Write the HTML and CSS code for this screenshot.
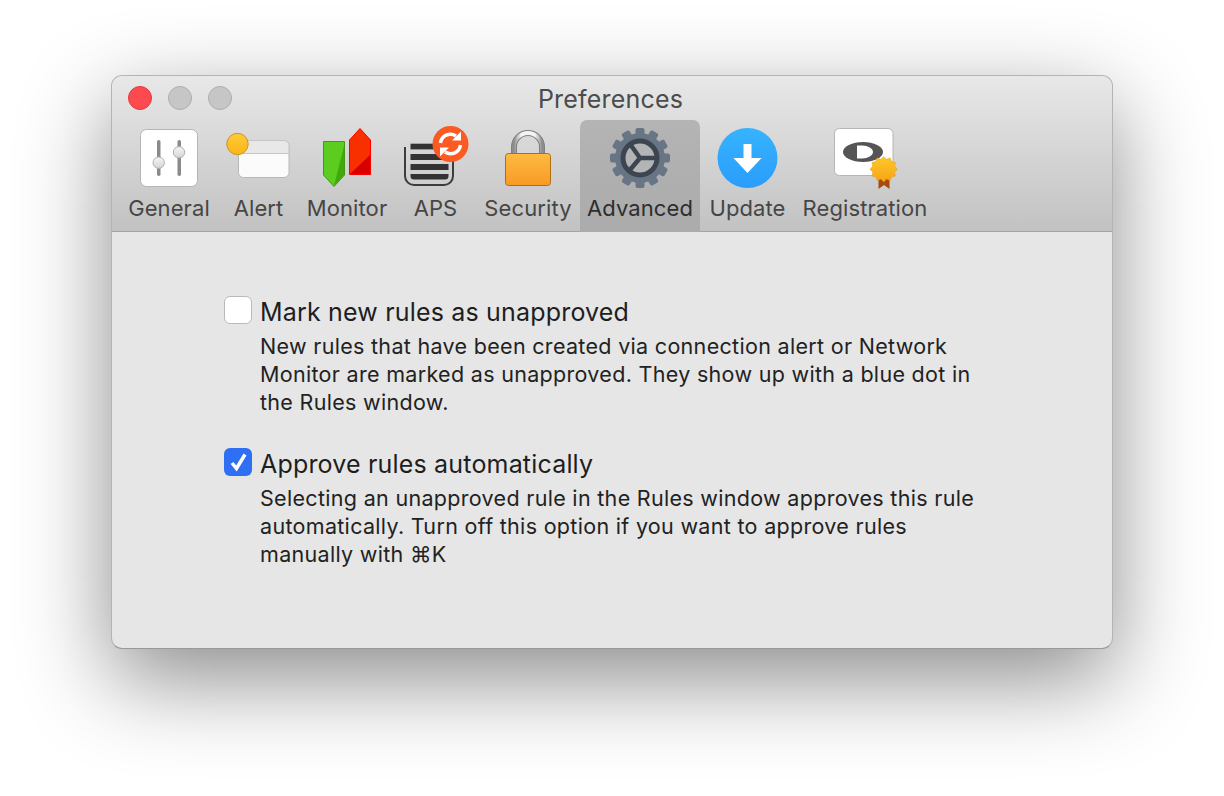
FILE: index.html
```html
<!DOCTYPE html>
<html lang="en">
<head>
  <meta charset="UTF-8" />
  <title>Preferences</title>
  <link rel="stylesheet" href="styles.css">
</head>
<body>
  <div class="window">
    <div class="toolbar">
      <div class="titlebar">
        <div class="lights">
          <span class="light close"></span>
          <span class="light"></span>
          <span class="light"></span>
        </div>
        <div class="title">Preferences</div>
      </div>
      <div class="tabs">
        <div class="tab tab-general">
          <svg class="icon" width="64" height="64" viewBox="0 0 64 64">
            <defs>
              <linearGradient id="thumb" x1="0" y1="0" x2="0" y2="1">
                <stop offset="0" stop-color="#f6f6f6"/>
                <stop offset="1" stop-color="#d4d4d4"/>
              </linearGradient>
            </defs>
            <rect x="3.500" y="1.500" width="57" height="57" rx="6" fill="#fff" stroke="#b5b5b5"/>
            <rect x="20" y="12" width="3.500" height="36" rx="1.700" fill="#8a8a8a"/>
            <rect x="40.500" y="12" width="3.500" height="36" rx="1.700" fill="#8a8a8a"/>
            <circle cx="21.700" cy="34.700" r="5.700" fill="url(#thumb)" stroke="#b0b0b0"/>
            <circle cx="42" cy="24.300" r="5.700" fill="url(#thumb)" stroke="#b0b0b0"/>
          </svg>
          <span class="label">General</span>
        </div>
        <div class="tab tab-alert">
          <svg class="icon" width="64" height="64" viewBox="0 0 64 64">
            <defs>
              <linearGradient id="yellow" x1="0" y1="0" x2="0" y2="1">
                <stop offset="0" stop-color="#fdcb3a"/>
                <stop offset="1" stop-color="#fcb416"/>
              </linearGradient>
            </defs>
            <rect x="11.500" y="12.500" width="50.500" height="37" rx="5" fill="#fbfbfb" stroke="#b8b8b8"/>
            <path d="M12 25.500V17.500a5 5 0 0 1 5-5h40a5 5 0 0 1 5 5v8z" fill="#e8e8e8" stroke="#c6c6c6"/>
            <circle cx="10.500" cy="16" r="10.700" fill="url(#yellow)" stroke="#c9962a"/>
          </svg>
          <span class="label">Alert</span>
        </div>
        <div class="tab tab-monitor">
          <svg class="icon" width="64" height="64" viewBox="0 0 64 64">
            <path d="M8.500 13.500h21v33.500L19 58.500 8.500 47z" fill="#5ccc1e" stroke="#3f9a12"/>
            <path d="M19 58 29 18v29z" fill="#41a80e"/>
            <path d="M34.500 46.500V12L45 .5 55.500 12v34.500z" fill="#f83000" stroke="#ff0000"/>
            <path d="M35 46 55 27v19z" fill="#d60000"/>
          </svg>
          <span class="label">Monitor</span>
        </div>
        <div class="tab tab-aps">
          <svg class="icon" width="70" height="64" viewBox="0 0 70 64">
            <path d="M4 19v29a9 9 0 0 0 9 9h30a9 9 0 0 0 9-9V30" fill="none" stroke="#3c3c3c" stroke-width="2"/>
            <rect x="9.500" y="15.700" width="38" height="5.700" fill="#333"/>
            <rect x="9.500" y="26" width="38" height="6" fill="#333"/>
            <rect x="9.500" y="36" width="38" height="6" fill="#333"/>
            <path d="M9.500 46h38v2a3.500 3.500 0 0 1-3.500 3.500H13A3.500 3.500 0 0 1 9.500 48z" fill="#333"/>
            <circle cx="49.500" cy="16" r="18" fill="#fb5a22"/>
            <path d="M39.500 15a10 10 0 0 1 15.500-7" fill="none" stroke="#fff" stroke-width="3.500"/>
            <path d="M59.500 17a10 10 0 0 1-15.500 7" fill="none" stroke="#fff" stroke-width="3.500"/>
            <path d="M51 12.500h9V3.500z" fill="#fff"/>
            <path d="M48 19.500h-9v9z" fill="#fff"/>
          </svg>
          <span class="label">APS</span>
        </div>
        <div class="tab tab-security">
          <svg class="icon" width="64" height="64" viewBox="0 0 64 64">
            <defs>
              <linearGradient id="lock" x1="0" y1="0" x2="0" y2="1">
                <stop offset="0" stop-color="#fdba42"/>
                <stop offset="1" stop-color="#f89a26"/>
              </linearGradient>
              <linearGradient id="shackle" x1="0" y1="0" x2="1" y2="0">
                <stop offset="0" stop-color="#8d8d8d"/>
                <stop offset=".25" stop-color="#f4f4f4"/>
                <stop offset=".75" stop-color="#f4f4f4"/>
                <stop offset="1" stop-color="#8d8d8d"/>
              </linearGradient>
            </defs>
            <path d="M18 28V19a14 14 0 0 1 28 0v9" fill="none" stroke="#7f7f7f" stroke-width="6"/>
            <path d="M18 28V19a14 14 0 0 1 28 0v9" fill="none" stroke="url(#shackle)" stroke-width="4"/>
            <rect x="9.500" y="25.500" width="45" height="32" rx="3" fill="url(#lock)" stroke="#ae6f14"/>
          </svg>
          <span class="label">Security</span>
        </div>
        <div class="tab tab-advanced selected">
          <svg class="icon" width="64" height="64" viewBox="0 0 64 64">
            <g transform="translate(0 -2)">
              <g fill="#677585">
                <circle cx="32" cy="32" r="25"/>
                <rect x="27.500" y="2" width="9" height="60" rx="2"/>
                <rect x="27.500" y="2" width="9" height="60" rx="2" transform="rotate(30 32 32)"/>
                <rect x="27.500" y="2" width="9" height="60" rx="2" transform="rotate(60 32 32)"/>
                <rect x="27.500" y="2" width="9" height="60" rx="2" transform="rotate(90 32 32)"/>
                <rect x="27.500" y="2" width="9" height="60" rx="2" transform="rotate(120 32 32)"/>
                <rect x="27.500" y="2" width="9" height="60" rx="2" transform="rotate(150 32 32)"/>
              </g>
              <circle cx="32" cy="32" r="17" fill="#b2b4b6" stroke="#3d4650" stroke-width="5"/>
              <path d="M32 32 22 18M32 32h17M32 32 21 45" fill="none" stroke="#3d4650" stroke-width="4.500"/>
            </g>
          </svg>
          <span class="label">Advanced</span>
        </div>
        <div class="tab tab-update">
          <svg class="icon" width="64" height="64" viewBox="0 0 64 64">
            <defs>
              <linearGradient id="blue" x1="0" y1="0" x2="0" y2="1">
                <stop offset="0" stop-color="#36b3ff"/>
                <stop offset="1" stop-color="#2a9dfb"/>
              </linearGradient>
            </defs>
            <circle cx="31.500" cy="30" r="30" fill="url(#blue)"/>
            <path d="M27.500 16h8v14h10L31.500 45l-14-15h10z" fill="#fff"/>
          </svg>
          <span class="label">Update</span>
        </div>
        <div class="tab tab-registration">
          <svg class="icon" width="70" height="64" viewBox="0 0 70 64">
            <defs>
              <linearGradient id="badge" x1="0" y1="0" x2="0" y2="1">
                <stop offset="0" stop-color="#fdc92c"/>
                <stop offset="1" stop-color="#f7a315"/>
              </linearGradient>
            </defs>
            <rect x="4.500" y=".5" width="58.500" height="47" rx="5" fill="#fff" stroke="#b5b5b5"/>
            <ellipse cx="33" cy="24" rx="20" ry="10" fill="#555"/>
            <path d="M27 17.500h5c6 0 11 3 11 6.500s-5 6.500-11 6.500h-5z" fill="#fff"/>
            <path d="M48.500 48v13l5.500-4 5.500 4V48z" fill="#a8490f"/>
            <path transform="translate(-2.800 -1) " d="M56.500 29.500l2.800 2.800 3.700-1.400 1.300 3.700 3.900.8-.8 3.900 2.900 2.900-2.900 2.900.8 3.900-3.900.8-1.300 3.700-3.700-1.400-2.800 2.800-2.800-2.800-3.700 1.400-1.300-3.700-3.900-.8.8-3.900-2.900-2.900 2.900-2.900-.8-3.900 3.900-.8 1.300-3.700 3.700 1.400z" fill="url(#badge)" stroke="#e59a10" stroke-width=".500"/>
          </svg>
          <span class="label">Registration</span>
        </div>
      </div>
    </div>
    <div class="content">
      <div class="option">
        <span class="checkbox"></span>
        <div class="option-text">
          <div class="option-title">Mark new rules as unapproved</div>
          <p class="option-desc">New rules that have been created via connection alert or Network<br>Monitor are marked as unapproved. They show up with a blue dot in<br>the Rules window.</p>
        </div>
      </div>
      <div class="option">
        <span class="checkbox checked">
          <svg width="28" height="28" viewBox="0 0 28 28"><path d="M8 15l4.500 5.500L21 6.500" fill="none" stroke="#fff" stroke-width="3.500"/></svg>
        </span>
        <div class="option-text">
          <div class="option-title">Approve rules automatically</div>
          <p class="option-desc">Selecting an unapproved rule in the Rules window approves this rule<br>automatically. Turn off this option if you want to approve rules<br>manually with ⌘K</p>
        </div>
      </div>
    </div>
  </div>
</body>
</html>
```

FILE: styles.css
```css
body {
  margin: 0;
  padding: 75px 0 0 111px;
  background: #fff;
  font-family: Inter, "Noto Sans", "DejaVu Sans", sans-serif;
  overflow: hidden;
  height: 721px;
}

.window {
  width: 1000px;
  height: 572px;
  border: 1px solid #b4b4b4;
  border-bottom-color: #999;
  border-radius: 11px;
  background: #e6e6e6;
  box-shadow: 0 30px 90px 0 rgba(0,0,0,0.46);
  overflow: hidden;
}

.toolbar {
  height: 155px;
  background: linear-gradient(#e8e8e8, #c2c2c2);
  border-bottom: 1px solid #a3a3a3;
}

.titlebar {
  height: 44px;
  display: flex;
  align-items: center;
  position: relative;
  justify-content: center;
}

.lights {
  position: absolute;
  left: 16px;
  top: 10px;
  display: flex;
  gap: 16px;
}

.light {
  width: 22px;
  height: 22px;
  border-radius: 50%;
  background: #c6c6c6;
  border: 1px solid #adadad;
}

.light.close {
  background: #fc4a4f;
  border-color: #e2383c;
}

.title {
  font-size: 25px;
  letter-spacing: 0.2px;
  color: #4c4c4c;
  margin: 2px 3px 0 0;
}

.tabs {
  display: flex;
  padding-left: 12px;
}

.tab {
  height: 112px;
  display: flex;
  flex-direction: column;
  align-items: center;
  flex-shrink: 0;
  border-radius: 7px 7px 0 0;
}

.tab-general { width: 90px; }
.tab-alert { width: 89px; }
.tab-monitor { width: 88px; }
.tab-aps { width: 89px; }
.tab-security { width: 96px; margin-right: 4px; }
.tab-advanced { width: 120px; }
.tab-update { width: 95px; }
.tab-registration { width: 140px; }

.tab.selected {
  background: linear-gradient(#b4b4b4, #ababab);
}

.icon {
  display: block;
  margin-top: 8px;
  flex-shrink: 0;
  overflow: visible;
}

.label {
  font-size: 22px;
  letter-spacing: 0.1px;
  line-height: 28px;
  color: #464646;
  margin-top: 2px;
  white-space: nowrap;
}

.selected .label {
  color: #2e2e2e;
}

.content {
  padding: 64px 0 0 112px;
}

.option {
  display: flex;
  gap: 8px;
  margin-bottom: 32px;
}

.checkbox {
  width: 28px;
  height: 28px;
  box-sizing: border-box;
  flex-shrink: 0;
  background: #fff;
  border: 1px solid #b9b9b9;
  border-radius: 6px;
}

.checkbox.checked {
  background: #2f6ff3;
  border: none;
}

.checkbox svg {
  display: block;
}

.option-title {
  font-size: 25px;
  letter-spacing: 0.18px;
  line-height: 32px;
  color: #1e1e1e;
}

.option-desc {
  margin: 4px 0 0;
  font-size: 21.500px;
  letter-spacing: 0.31px;
  line-height: 28px;
  color: #222;
}
```
